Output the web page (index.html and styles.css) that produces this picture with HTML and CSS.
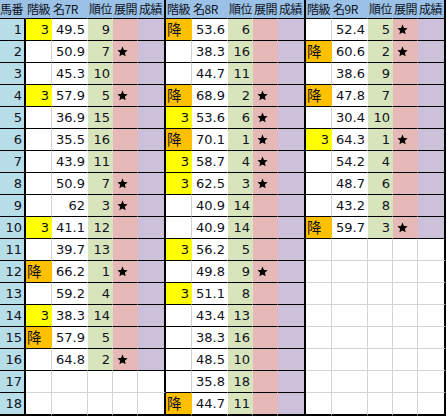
FILE: index.html
```html
<!DOCTYPE html>
<html lang="ja">
<head>
<meta charset="utf-8">
<title>成績表</title>
<link rel="stylesheet" href="styles.css">
</head>
<body>
<svg class="defs" aria-hidden="true"><symbol id="st" viewBox="0 0 24 24"><path d="M12 1.2l3.2 7.4 8 .7-6.1 5.3 1.8 7.9L12 18.3l-6.9 4.2 1.8-7.9L.8 9.3l8-.7z"/></symbol></svg>
<div class="sheet">
<div class="h hn">馬番</div><div class="h">階級</div><div class="h">名7R</div><div class="h">順位</div><div class="h">展開</div><div class="h he">成績</div><div class="h">階級</div><div class="h">名8R</div><div class="h">順位</div><div class="h">展開</div><div class="h he">成績</div><div class="h">階級</div><div class="h">名9R</div><div class="h">順位</div><div class="h">展開</div><div class="h he">成績</div>

<div class="n">1</div>
<div class="k y">3</div><div class="v">49.5</div><div class="r">9</div><div class="t"></div><div class="s"></div>
<div class="k o">降</div><div class="v">53.6</div><div class="r">6</div><div class="t"></div><div class="s"></div>
<div class="k"></div><div class="v">52.4</div><div class="r">5</div><div class="t"><svg class="st"><use href="#st"/></svg></div><div class="s"></div>

<div class="n">2</div>
<div class="k"></div><div class="v">50.9</div><div class="r">7</div><div class="t"><svg class="st"><use href="#st"/></svg></div><div class="s"></div>
<div class="k"></div><div class="v">38.3</div><div class="r">16</div><div class="t"></div><div class="s"></div>
<div class="k o">降</div><div class="v">60.6</div><div class="r">2</div><div class="t"><svg class="st"><use href="#st"/></svg></div><div class="s"></div>

<div class="n">3</div>
<div class="k"></div><div class="v">45.3</div><div class="r">10</div><div class="t"></div><div class="s"></div>
<div class="k"></div><div class="v">44.7</div><div class="r">11</div><div class="t"></div><div class="s"></div>
<div class="k"></div><div class="v">38.6</div><div class="r">9</div><div class="t"></div><div class="s"></div>

<div class="n">4</div>
<div class="k y">3</div><div class="v">57.9</div><div class="r">5</div><div class="t"><svg class="st"><use href="#st"/></svg></div><div class="s"></div>
<div class="k o">降</div><div class="v">68.9</div><div class="r">2</div><div class="t"><svg class="st"><use href="#st"/></svg></div><div class="s"></div>
<div class="k o">降</div><div class="v">47.8</div><div class="r">7</div><div class="t"></div><div class="s"></div>

<div class="n">5</div>
<div class="k"></div><div class="v">36.9</div><div class="r">15</div><div class="t"></div><div class="s"></div>
<div class="k y">3</div><div class="v">53.6</div><div class="r">6</div><div class="t"><svg class="st"><use href="#st"/></svg></div><div class="s"></div>
<div class="k"></div><div class="v">30.4</div><div class="r">10</div><div class="t"></div><div class="s"></div>

<div class="n">6</div>
<div class="k"></div><div class="v">35.5</div><div class="r">16</div><div class="t"></div><div class="s"></div>
<div class="k o">降</div><div class="v">70.1</div><div class="r">1</div><div class="t"><svg class="st"><use href="#st"/></svg></div><div class="s"></div>
<div class="k y">3</div><div class="v">64.3</div><div class="r">1</div><div class="t"><svg class="st"><use href="#st"/></svg></div><div class="s"></div>

<div class="n">7</div>
<div class="k"></div><div class="v">43.9</div><div class="r">11</div><div class="t"></div><div class="s"></div>
<div class="k y">3</div><div class="v">58.7</div><div class="r">4</div><div class="t"><svg class="st"><use href="#st"/></svg></div><div class="s"></div>
<div class="k"></div><div class="v">54.2</div><div class="r">4</div><div class="t"></div><div class="s"></div>

<div class="n">8</div>
<div class="k"></div><div class="v">50.9</div><div class="r">7</div><div class="t"><svg class="st"><use href="#st"/></svg></div><div class="s"></div>
<div class="k y">3</div><div class="v">62.5</div><div class="r">3</div><div class="t"><svg class="st"><use href="#st"/></svg></div><div class="s"></div>
<div class="k"></div><div class="v">48.7</div><div class="r">6</div><div class="t"></div><div class="s"></div>

<div class="n">9</div>
<div class="k"></div><div class="v">62</div><div class="r">3</div><div class="t"><svg class="st"><use href="#st"/></svg></div><div class="s"></div>
<div class="k"></div><div class="v">40.9</div><div class="r">14</div><div class="t"></div><div class="s"></div>
<div class="k"></div><div class="v">43.2</div><div class="r">8</div><div class="t"></div><div class="s"></div>

<div class="n">10</div>
<div class="k y">3</div><div class="v">41.1</div><div class="r">12</div><div class="t"></div><div class="s"></div>
<div class="k"></div><div class="v">40.9</div><div class="r">14</div><div class="t"></div><div class="s"></div>
<div class="k o">降</div><div class="v">59.7</div><div class="r">3</div><div class="t"><svg class="st"><use href="#st"/></svg></div><div class="s"></div>

<div class="n">11</div>
<div class="k"></div><div class="v">39.7</div><div class="r">13</div><div class="t"></div><div class="s"></div>
<div class="k y">3</div><div class="v">56.2</div><div class="r">5</div><div class="t"></div><div class="s"></div>
<div class="x"></div><div class="x"></div><div class="x"></div><div class="x"></div><div class="x xe"></div>

<div class="n">12</div>
<div class="k o">降</div><div class="v">66.2</div><div class="r">1</div><div class="t"><svg class="st"><use href="#st"/></svg></div><div class="s"></div>
<div class="k"></div><div class="v">49.8</div><div class="r">9</div><div class="t"><svg class="st"><use href="#st"/></svg></div><div class="s"></div>
<div class="x"></div><div class="x"></div><div class="x"></div><div class="x"></div><div class="x xe"></div>

<div class="n">13</div>
<div class="k"></div><div class="v">59.2</div><div class="r">4</div><div class="t"></div><div class="s"></div>
<div class="k y">3</div><div class="v">51.1</div><div class="r">8</div><div class="t"></div><div class="s"></div>
<div class="x"></div><div class="x"></div><div class="x"></div><div class="x"></div><div class="x xe"></div>

<div class="n">14</div>
<div class="k y">3</div><div class="v">38.3</div><div class="r">14</div><div class="t"></div><div class="s"></div>
<div class="k"></div><div class="v">43.4</div><div class="r">13</div><div class="t"></div><div class="s"></div>
<div class="x"></div><div class="x"></div><div class="x"></div><div class="x"></div><div class="x xe"></div>

<div class="n">15</div>
<div class="k o">降</div><div class="v">57.9</div><div class="r">5</div><div class="t"></div><div class="s"></div>
<div class="k"></div><div class="v">38.3</div><div class="r">16</div><div class="t"></div><div class="s"></div>
<div class="x"></div><div class="x"></div><div class="x"></div><div class="x"></div><div class="x xe"></div>

<div class="n">16</div>
<div class="k"></div><div class="v">64.8</div><div class="r">2</div><div class="t"><svg class="st"><use href="#st"/></svg></div><div class="s"></div>
<div class="k"></div><div class="v">48.5</div><div class="r">10</div><div class="t"></div><div class="s"></div>
<div class="x"></div><div class="x"></div><div class="x"></div><div class="x"></div><div class="x xe"></div>

<div class="n">17</div>
<div class="x"></div><div class="x"></div><div class="x"></div><div class="x"></div><div class="x xe"></div>
<div class="k"></div><div class="v">35.8</div><div class="r">18</div><div class="t"></div><div class="s"></div>
<div class="x"></div><div class="x"></div><div class="x"></div><div class="x"></div><div class="x xe"></div>

<div class="n">18</div>
<div class="x"></div><div class="x"></div><div class="x"></div><div class="x"></div><div class="x xe"></div>
<div class="k o">降</div><div class="v">44.7</div><div class="r">11</div><div class="t"></div><div class="s"></div>
<div class="x"></div><div class="x"></div><div class="x"></div><div class="x"></div><div class="x xe"></div>
</div>
</body>
</html>
```
FILE: styles.css
```css
* { box-sizing: border-box; }
html, body { margin: 0; padding: 0; background: #fff; }

.defs { display: none; }

.sheet {
  display: grid;
  grid-template-columns: 26px repeat(3, 26px 36px 25px 25px 28px);
  grid-template-rows: 19px repeat(17, 22px) 23px;
  width: 446px;
  font-family: "DejaVu Sans", sans-serif;
  font-size: 13px;
  color: #10121c;
}

.sheet > div {
  display: flex;
  align-items: center;
  white-space: nowrap;
  overflow: hidden;
  background: #fff;
  border-bottom: 1px solid #000;
  border-right: 1px solid transparent;
  line-height: 1;
}

.sheet > div:nth-last-child(-n+16) { border-bottom-width: 2px; }

.sheet > .h {
  background: #9BC2E6;
  font-family: "Noto Sans CJK JP", sans-serif;
  font-size: 12px;
  padding-left: 1px;
  letter-spacing: -0.4px;
}
.sheet > .hn { padding-left: 0; }
.sheet > .he { border-right: 2px solid #000; }

.sheet > .n {
  background: #B7DEE8;
  justify-content: flex-end;
  padding-right: 2px;
  border-right: 2px solid #000;
}

.sheet > .k {
  border-right-color: #d4d4d4;
  justify-content: flex-end;
  padding-right: 2px;
}
.sheet > .k.y {
  background: #FFFF00;
  border-right-color: transparent;
}
.sheet > .k.o {
  background: #FFC000;
  border-right-color: transparent;
  justify-content: flex-start;
  padding-left: 1px;
  font-family: "Noto Sans CJK JP", sans-serif;
  font-size: 14.5px;
}

.sheet > .v {
  justify-content: flex-end;
  padding-right: 2px;
}

.sheet > .r {
  background: #D8E4BC;
  justify-content: flex-end;
  padding-right: 2px;
}

.sheet > .t {
  background: #E6B8B7;
  padding-left: 4px;
}

.sheet > .s {
  background: #CCC0DA;
  border-right: 2px solid #000;
}

.sheet > .x {
  border-right-color: #d4d4d4;
  border-bottom-color: #d4d4d4;
}
.sheet > .xe { border-right: 2px solid #000; }
.sheet > .x:nth-last-child(-n+16) { border-bottom-color: #000; }

.st {
  width: 11px;
  height: 11px;
  fill: #000;
  display: block;
}
```
